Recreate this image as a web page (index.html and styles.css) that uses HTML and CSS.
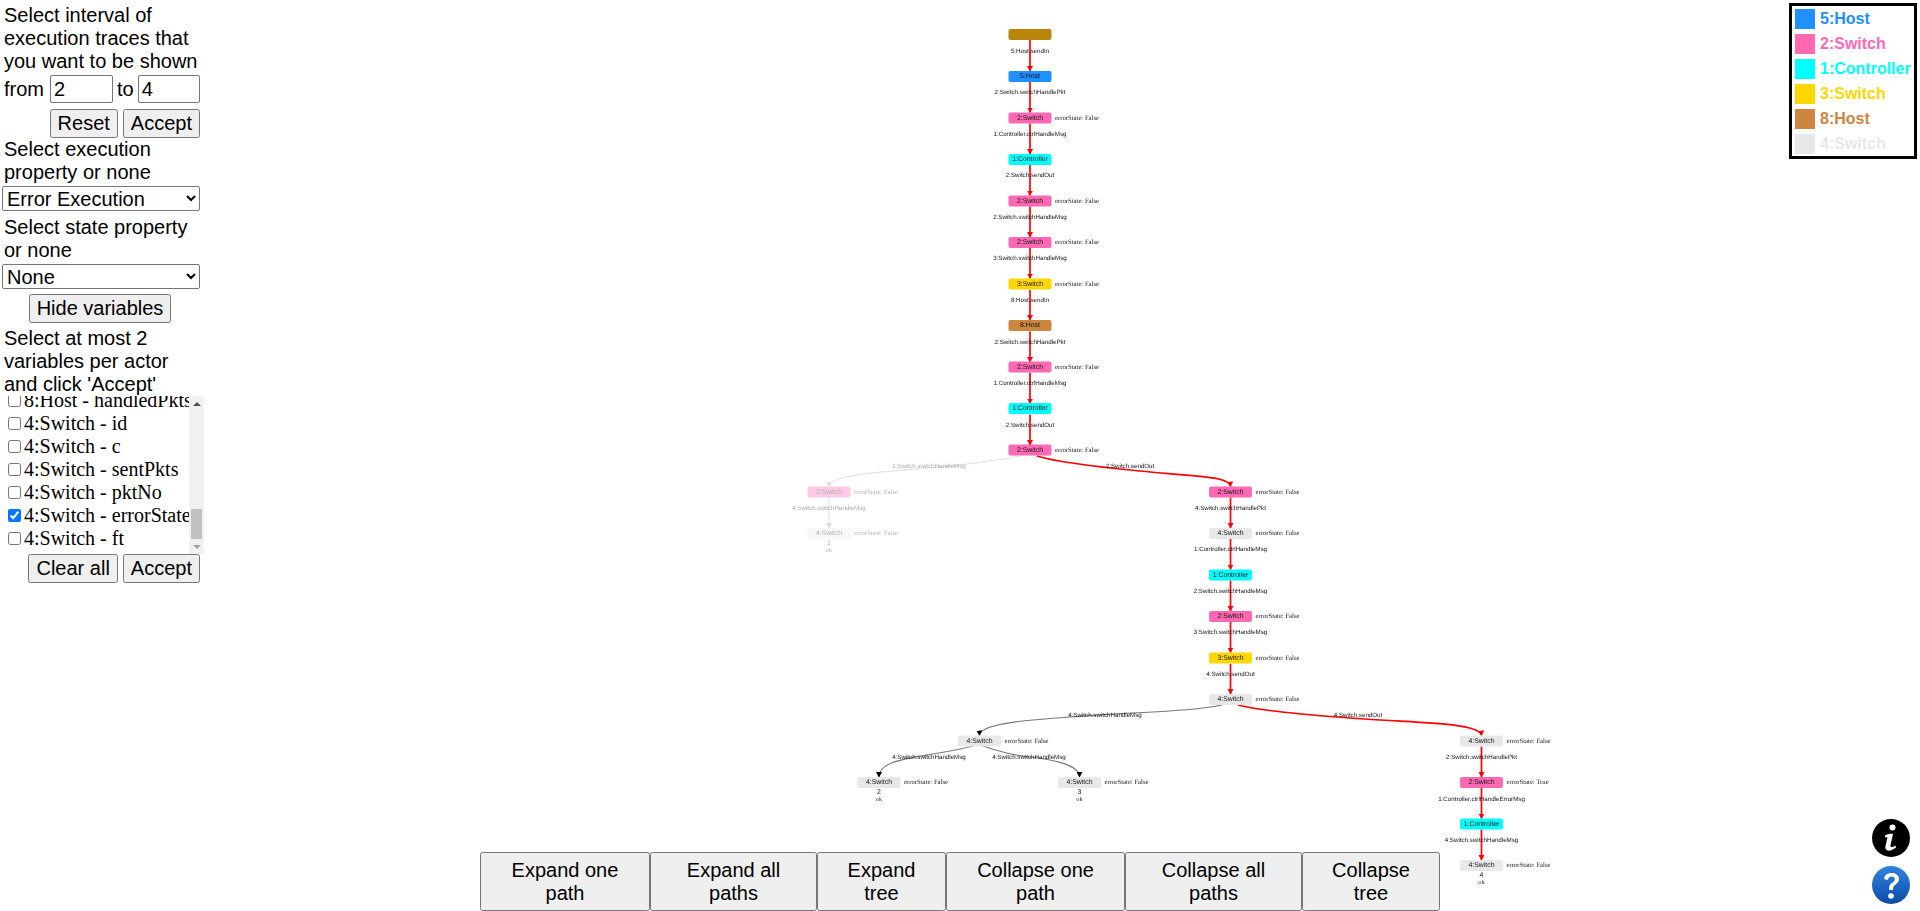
FILE: index.html
```html
<!DOCTYPE html>
<html lang="en">
<head>
<meta charset="utf-8">
<title>Execution trace tree</title>
<link rel="stylesheet" href="styles.css">
</head>
<body>
<div class="page">
  <div class="workspace">
    <aside class="sidebar">
      <p class="txt">Select interval of execution traces that you want to be shown</p>
      <div class="range">
        <span>from</span><input class="num" type="text" value="2"><span>to</span><input class="num" type="text" value="4">
      </div>
      <div class="actions"><button class="btn">Reset</button><button class="btn">Accept</button></div>
      <p class="txt">Select execution property or none</p>
      <select class="sel"><option>Error Execution</option></select>
      <p class="txt gap-top">Select state property or none</p>
      <select class="sel"><option>None</option></select>
      <div class="center"><button class="btn">Hide variables</button></div>
      <p class="txt gap-top">Select at most 2 variables per actor and click 'Accept'</p>
      <div class="varbox">
        <div class="vars">
          <label class="var"><input type="checkbox">8:Host - handledPkts</label>
          <label class="var"><input type="checkbox">4:Switch - id</label>
          <label class="var"><input type="checkbox">4:Switch - c</label>
          <label class="var"><input type="checkbox">4:Switch - sentPkts</label>
          <label class="var"><input type="checkbox">4:Switch - pktNo</label>
          <label class="var"><input type="checkbox" checked>4:Switch - errorState</label>
          <label class="var"><input type="checkbox">4:Switch - ft</label>
        </div>
        <div class="scrollbar">
          <span class="arrow up"></span>
          <span class="track"><span class="thumb"></span></span>
          <span class="arrow down"></span>
        </div>
      </div>
      <div class="actions"><button class="btn">Clear all</button><button class="btn">Accept</button></div>
    </aside>

    <svg class="tree" viewBox="204 0 1716 852" width="1716" height="852" xmlns="http://www.w3.org/2000/svg">
      <defs>
        <marker id="ah-red" markerUnits="userSpaceOnUse" markerWidth="6" markerHeight="6" refX="5" refY="3" orient="auto"><path d="M0 0L5.500 3L0 6z" fill="#f00"/></marker>
        <marker id="ah-black" markerUnits="userSpaceOnUse" markerWidth="6" markerHeight="6" refX="5" refY="3" orient="auto"><path d="M0 0L5.500 3L0 6z" fill="#000"/></marker>
        <marker id="ah-pale" markerUnits="userSpaceOnUse" markerWidth="6" markerHeight="6" refX="5" refY="3" orient="auto"><path d="M0 0L5.500 3L0 6z" fill="#ddd"/></marker>
      </defs>

      <g class="edges">
        <path class="e red" d="M1030 40V71"/><path class="e red" d="M1030 82V112.500"/><path class="e red" d="M1030 123.500V154"/><path class="e red" d="M1030 165V195.500"/>
        <path class="e red" d="M1030 206.500V237"/><path class="e red" d="M1030 248V278.500"/><path class="e red" d="M1030 290V320"/><path class="e red" d="M1030 331.500V362"/>
        <path class="e red" d="M1030 373V403.500"/><path class="e red" d="M1030 414.500V445"/>
        <path class="e red" d="M1037 456C1062 464 1120 469 1150 472C1190 476 1230 476 1230.500 486.500"/>
        <path class="e red" d="M1230.500 497.500V528"/><path class="e red" d="M1230.500 539V569.500"/><path class="e red" d="M1230.500 580.500V611"/><path class="e red" d="M1230.500 622V652.500"/><path class="e red" d="M1230.500 664V694"/>
        <path class="e red" d="M1238 705C1265 712 1320 716 1365 719C1420 723 1481 723 1481.500 735.500"/>
        <path class="e red" d="M1481.500 746.500V777"/><path class="e red" d="M1481.500 788V818.500"/><path class="e red" d="M1481.500 829.500V860"/>
        <path class="e grey" d="M1222 705C1190 712 1140 712 1105 714.500C1040 719 979 722 979.500 735.500"/>
        <path class="e grey" d="M973 746C950 752 925 755 920 756C900 760 879 763 879 777"/>
        <path class="e grey" d="M983 746C1000 752 1020 756 1030 757C1055 760 1079.500 765 1079.500 777"/>
        <path class="e pale" d="M1020 456C990 462 960 465 930 468C880 472 829 475 829 486.500"/>
        <path class="e pale" d="M829 497.500V528"/>
      </g>

      <g class="labels">
        <text x="1030" y="50">5:Host.sendIn</text><text x="1030" y="91">2:Switch.switchHandlePkt</text><text x="1030" y="133">1:Controller.ctrlHandleMsg</text><text x="1030" y="174">2:Switch.sendOut</text>
        <text x="1030" y="216">2:Switch.switchHandleMsg</text><text x="1030" y="257">3:Switch.switchHandleMsg</text><text x="1030" y="299">8:Host.sendIn</text><text x="1030" y="341">2:Switch.switchHandlePkt</text>
        <text x="1030" y="382">1:Controller.ctrlHandleMsg</text><text x="1030" y="424">2:Switch.sendOut</text>
        <text x="1130" y="465">2:Switch.sendOut</text>
        <text x="1230.500" y="507">4:Switch.switchHandlePkt</text><text x="1230.500" y="548">1:Controller.ctrlHandleMsg</text><text x="1230.500" y="590">2:Switch.switchHandleMsg</text><text x="1230.500" y="631">3:Switch.switchHandleMsg</text><text x="1230.500" y="673">4:Switch.sendOut</text>
        <text x="1105" y="714">4:Switch.switchHandleMsg</text><text x="1358" y="714">4:Switch.sendOut</text>
        <text x="929" y="756">4:Switch.switchHandleMsg</text><text x="1029" y="756">4:Switch.switchHandleMsg</text>
        <text x="1481.500" y="756">2:Switch.switchHandlePkt</text><text x="1481.500" y="798">1:Controller.ctrlHandleErrorMsg</text><text x="1481.500" y="839">4:Switch.switchHandleMsg</text>
      </g>
      <g class="labels faded">
        <text x="929" y="465">2:Switch.switchHandleMsg</text><text x="829" y="507">4:Switch.switchHandleMsg</text>
      </g>

      <g class="node" transform="translate(1030 34.500)"><rect class="n brown" x="-21.500" y="-5.500" width="43" height="11" rx="2"/></g>
      <g class="node" transform="translate(1030 76.500)"><rect class="n blue" x="-21.500" y="-5.500" width="43" height="11" rx="2"/><text class="name">5:Host</text></g>
      <g class="node" transform="translate(1030 118)"><rect class="n pink" x="-21.500" y="-5.500" width="43" height="11" rx="2"/><text class="name">2:Switch</text><text class="var-val" x="25">errorState: False</text></g>
      <g class="node" transform="translate(1030 159.500)"><rect class="n cyan" x="-21.500" y="-5.500" width="43" height="11" rx="2"/><text class="name">1:Controller</text></g>
      <g class="node" transform="translate(1030 201)"><rect class="n pink" x="-21.500" y="-5.500" width="43" height="11" rx="2"/><text class="name">2:Switch</text><text class="var-val" x="25">errorState: False</text></g>
      <g class="node" transform="translate(1030 242.500)"><rect class="n pink" x="-21.500" y="-5.500" width="43" height="11" rx="2"/><text class="name">2:Switch</text><text class="var-val" x="25">errorState: False</text></g>
      <g class="node" transform="translate(1030 284)"><rect class="n gold" x="-21.500" y="-5.500" width="43" height="11" rx="2"/><text class="name">3:Switch</text><text class="var-val" x="25">errorState: False</text></g>
      <g class="node" transform="translate(1030 325.500)"><rect class="n peru" x="-21.500" y="-5.500" width="43" height="11" rx="2"/><text class="name">8:Host</text></g>
      <g class="node" transform="translate(1030 367)"><rect class="n pink" x="-21.500" y="-5.500" width="43" height="11" rx="2"/><text class="name">2:Switch</text><text class="var-val" x="25">errorState: False</text></g>
      <g class="node" transform="translate(1030 408.500)"><rect class="n cyan" x="-21.500" y="-5.500" width="43" height="11" rx="2"/><text class="name">1:Controller</text></g>
      <g class="node" transform="translate(1030 450)"><rect class="n pink" x="-21.500" y="-5.500" width="43" height="11" rx="2"/><text class="name">2:Switch</text><text class="var-val" x="25">errorState: False</text></g>

      <g class="node faded" transform="translate(829 492)"><rect class="n pink" x="-21.500" y="-5.500" width="43" height="11" rx="2"/><text class="name">2:Switch</text><text class="var-val" x="25">errorState: False</text></g>
      <g class="node faded" transform="translate(829 533.500)"><rect class="n grey-n" x="-21.500" y="-5.500" width="43" height="11" rx="2"/><text class="name">4:Switch</text><text class="var-val" x="25">errorState: False</text><text class="count" y="9.500">1</text><text class="ok" y="16.500">ok</text></g>

      <g class="node" transform="translate(1230.500 492)"><rect class="n pink" x="-21.500" y="-5.500" width="43" height="11" rx="2"/><text class="name">2:Switch</text><text class="var-val" x="25">errorState: False</text></g>
      <g class="node" transform="translate(1230.500 533.500)"><rect class="n grey-n" x="-21.500" y="-5.500" width="43" height="11" rx="2"/><text class="name">4:Switch</text><text class="var-val" x="25">errorState: False</text></g>
      <g class="node" transform="translate(1230.500 575)"><rect class="n cyan" x="-21.500" y="-5.500" width="43" height="11" rx="2"/><text class="name">1:Controller</text></g>
      <g class="node" transform="translate(1230.500 616.500)"><rect class="n pink" x="-21.500" y="-5.500" width="43" height="11" rx="2"/><text class="name">2:Switch</text><text class="var-val" x="25">errorState: False</text></g>
      <g class="node" transform="translate(1230.500 658)"><rect class="n gold" x="-21.500" y="-5.500" width="43" height="11" rx="2"/><text class="name">3:Switch</text><text class="var-val" x="25">errorState: False</text></g>
      <g class="node" transform="translate(1230.500 699.500)"><rect class="n grey-n" x="-21.500" y="-5.500" width="43" height="11" rx="2"/><text class="name">4:Switch</text><text class="var-val" x="25">errorState: False</text></g>

      <g class="node" transform="translate(979.500 741)"><rect class="n grey-n" x="-21.500" y="-5.500" width="43" height="11" rx="2"/><text class="name">4:Switch</text><text class="var-val" x="25">errorState: False</text></g>
      <g class="node" transform="translate(879 782.500)"><rect class="n grey-n" x="-21.500" y="-5.500" width="43" height="11" rx="2"/><text class="name">4:Switch</text><text class="var-val" x="25">errorState: False</text><text class="count" y="9.500">2</text><text class="ok" y="16.500">ok</text></g>
      <g class="node" transform="translate(1079.500 782.500)"><rect class="n grey-n" x="-21.500" y="-5.500" width="43" height="11" rx="2"/><text class="name">4:Switch</text><text class="var-val" x="25">errorState: False</text><text class="count" y="9.500">3</text><text class="ok" y="16.500">ok</text></g>

      <g class="node" transform="translate(1481.500 741)"><rect class="n grey-n" x="-21.500" y="-5.500" width="43" height="11" rx="2"/><text class="name">4:Switch</text><text class="var-val" x="25">errorState: False</text></g>
      <g class="node" transform="translate(1481.500 782.500)"><rect class="n pink" x="-21.500" y="-5.500" width="43" height="11" rx="2"/><text class="name">2:Switch</text><text class="var-val" x="25">errorState: True</text></g>
      <g class="node" transform="translate(1481.500 824)"><rect class="n cyan" x="-21.500" y="-5.500" width="43" height="11" rx="2"/><text class="name">1:Controller</text></g>
      <g class="node" transform="translate(1481.500 865.500)"><rect class="n grey-n" x="-21.500" y="-5.500" width="43" height="11" rx="2"/><text class="name">4:Switch</text><text class="var-val" x="25">errorState: False</text><text class="count" y="9.500">4</text><text class="ok" y="16.500">ok</text></g>
    </svg>
  </div>

  <nav class="toolbar">
    <button class="tool w170">Expand one path</button>
    <button class="tool w167">Expand all paths</button>
    <button class="tool w129">Expand tree</button>
    <button class="tool w179">Collapse one path</button>
    <button class="tool w177">Collapse all paths</button>
    <button class="tool w138">Collapse tree</button>
  </nav>

  <ul class="legend">
    <li class="lg c-blue"><span class="sw"></span>5:Host</li>
    <li class="lg c-pink"><span class="sw"></span>2:Switch</li>
    <li class="lg c-cyan"><span class="sw"></span>1:Controller</li>
    <li class="lg c-gold"><span class="sw"></span>3:Switch</li>
    <li class="lg c-peru"><span class="sw"></span>8:Host</li>
    <li class="lg c-grey"><span class="sw"></span>4:Switch</li>
  </ul>

  <div class="help">
    <svg class="ic" viewBox="0 0 38 38" width="38" height="38" aria-label="info">
      <circle cx="19" cy="19" r="19" fill="#000"/>
      <circle cx="20.500" cy="8.500" r="3" fill="#fff"/>
      <path d="M13 16.500C15 15 19 14.500 21 15L18.500 26C18 28.500 20 28.800 23.500 26.500L24 28.500C21 31 18 32 15.500 31.500C13.500 31 13 29 13.500 27L15.500 18.500C14.800 18.200 14 18.200 13 18.500Z" fill="#fff"/>
    </svg>
    <svg class="ic" viewBox="0 0 38 38" width="38" height="38" aria-label="help">
      <defs><linearGradient id="qg" x1="0" y1="0" x2="0" y2="1"><stop offset="0" stop-color="#2f85e0"/><stop offset="1" stop-color="#0d4aa8"/></linearGradient></defs>
      <circle cx="19" cy="19" r="19" fill="url(#qg)"/>
      <path d="M12 13C12.500 9 15.500 7 19.500 7C24 7 27 9.500 27 13C27 16 25 17.500 23 19C21.500 20 21 21 21 24H17C17 20.500 17.500 18.500 20 16.800C22 15.400 22.800 14.500 22.800 13.200C22.800 11.500 21.500 10.500 19.500 10.500C17.500 10.500 16.200 11.800 16 14Z" fill="#fff"/>
      <circle cx="19" cy="30" r="2.800" fill="#fff"/>
    </svg>
  </div>
</div>
</body>
</html>
```

FILE: styles.css
```css
* { box-sizing: border-box; }
html, body { margin: 0; height: 100%; background: #fff; overflow: hidden; }
body { font-family: "Liberation Sans", Arial, sans-serif; font-size: 20px; color: #000; }

.page { position: relative; width: 1920px; height: 911px; display: flex; flex-direction: column; }
.workspace { display: flex; height: 852px; flex: none; }

.sidebar { width: 204px; flex: none; padding-top: 4px; display: flex; flex-direction: column; align-items: flex-start; }
.txt { margin: 0; padding-left: 4px; width: 200px; line-height: 23px; }
.gap-top { margin-top: 5px; }
.range { display: flex; align-items: center; height: 32px; width: 200px; padding-left: 4px; }
.range span:last-of-type { margin: 0 4px; }
.range span:first-child { margin-right: 6px; }
.num { width: 63px; height: 28px; font: 20px "Liberation Sans", Arial, sans-serif; padding: 1px 3px; border: 1px solid #767676; border-radius: 2px; }
.num:last-child { width: 62.500px; }
.actions { display: flex; justify-content: flex-end; gap: 5px; width: 200px; margin-top: 4px; }
.varbox + .actions { margin-top: 0; }
.btn { font: 20px "Liberation Sans", Arial, sans-serif; height: 29px; padding: 1px 6px; }
.actions .btn:first-child { flex: none; }
.sel { display: block; width: 198px; height: 25px; margin: 2px 0 0 2px; font: 20px "Liberation Sans", Arial, sans-serif; background: #fff; border: 1px solid #767676; border-radius: 2px; padding: 0; }
.center { width: 200px; display: flex; justify-content: center; margin-top: 5px; }
.center + .gap-top { margin-top: 4px; }

.varbox { display: flex; width: 204px; height: 158px; flex: none; }
.vars { flex: 1; min-width: 0; height: 158px; overflow: hidden; display: flex; flex-direction: column; justify-content: flex-end; padding-bottom: 4px; }
.var { display: flex; align-items: center; flex: none; height: 23px; font: 20px "Liberation Serif", "Times New Roman", serif; white-space: nowrap; padding-left: 4px; }
.var input { width: 13px; height: 13px; margin: 0 3px 0 4px; flex: none; }

.scrollbar { width: 15px; flex: none; background: #f1f1f1; display: flex; flex-direction: column; }
.arrow { flex: none; height: 15px; display: flex; align-items: center; justify-content: center; }
.arrow::before { content: ""; border-left: 4px solid transparent; border-right: 4px solid transparent; }
.arrow.up::before { border-bottom: 4px solid #505050; }
.arrow.down::before { border-top: 4px solid #a3a3a3; }
.track { flex: 1; display: flex; flex-direction: column; justify-content: flex-end; align-items: center; }
.thumb { display: block; width: 11px; height: 30px; background: #c1c1c1; }

.tree { flex: none; overflow: visible; filter: blur(.4px); text-rendering: geometricPrecision; }
.e { fill: none; }
.e.red { stroke: #f00; stroke-width: 1.7; marker-end: url(#ah-red); }
.e.grey { stroke: #777; stroke-width: 1.1; marker-end: url(#ah-black); }
.e.pale { stroke: #e4e4e4; stroke-width: 1.2; marker-end: url(#ah-pale); }
.labels { transform: translateY(1.5px); }
.labels text { font: 6.200px "Liberation Sans", Arial, sans-serif; fill: #111; text-anchor: middle; dominant-baseline: central; }
.labels.faded text { fill: #aaa; }
.n { stroke: none; }
.brown { fill: #b8860b; }
.blue { fill: #1e90ff; }
.pink { fill: #ff69b4; }
.cyan { fill: #0ff; }
.gold { fill: #ffd700; }
.peru { fill: #cd853f; }
.grey-n { fill: #e8e8e8; }
.name { font: 6.900px "Liberation Sans", Arial, sans-serif; fill: #111; text-anchor: middle; dominant-baseline: central; }
.var-val { font: 6.700px "Liberation Serif", "Times New Roman", serif; fill: #222; dominant-baseline: central; }
.count { font: 6.900px "Liberation Sans", Arial, sans-serif; fill: #111; text-anchor: middle; dominant-baseline: central; }
.ok { font: 6.300px "Liberation Serif", "Times New Roman", serif; fill: #333; text-anchor: middle; dominant-baseline: central; }
.node.faded { opacity: .35; }

.toolbar { display: flex; justify-content: center; height: 59px; flex: none; }
.tool { height: 59px; font: 20px "Liberation Sans", Arial, sans-serif; padding: 1px 16px; flex: none; }
.w170 { width: 170px; }
.w167 { width: 167px; }
.w129 { width: 129px; }
.w179 { width: 179px; }
.w177 { width: 177px; }
.w138 { width: 138px; }

.legend { position: absolute; top: 3px; right: 3px; width: 128px; height: 156px; margin: 0; padding: 3px 0 0 3px; list-style: none; border: 3px solid #000; background: #fff; display: flex; flex-direction: column; gap: 5px; }
.lg { display: flex; align-items: center; gap: 5px; height: 20px; font: bold 16px "Liberation Sans", Arial, sans-serif; white-space: nowrap; }
.sw { width: 20px; height: 20px; flex: none; background: currentColor; }
.c-blue { color: #1e90ff; }
.c-pink { color: #ff69b4; }
.c-cyan { color: #0ff; }
.c-gold { color: #ffd700; }
.c-peru { color: #cd853f; }
.c-grey { color: #e8e8e8; }

.help { position: absolute; left: 1872px; top: 819px; display: flex; flex-direction: column; gap: 9px; }
.ic { display: block; }
```
